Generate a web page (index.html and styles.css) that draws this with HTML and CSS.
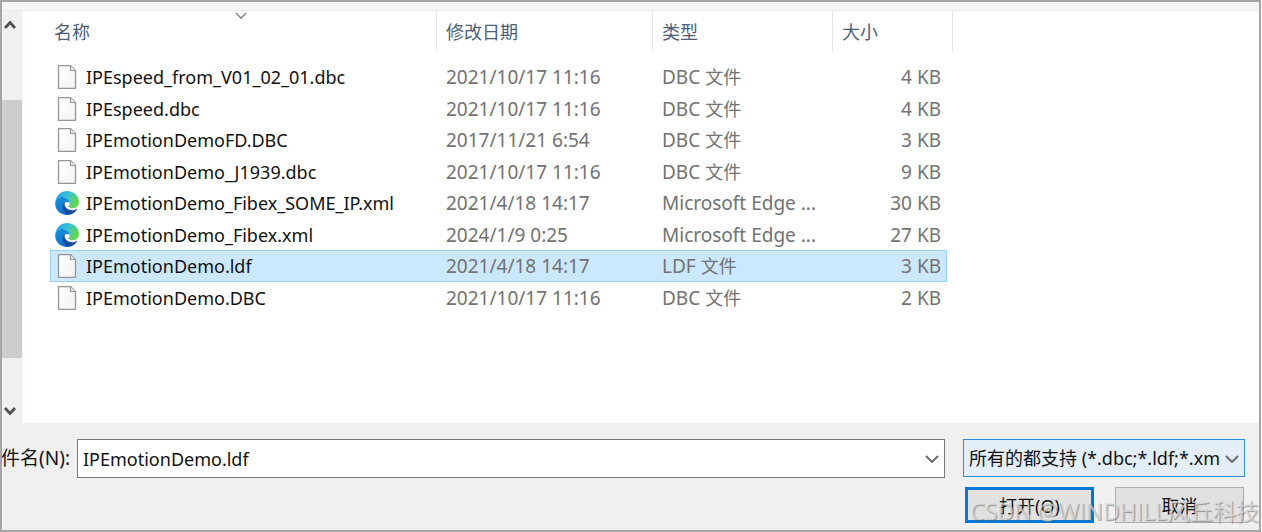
FILE: index.html
```html
<!DOCTYPE html>
<html lang="zh-CN">
<head>
<meta charset="utf-8">
<meta name="viewport" content="width=device-width, initial-scale=1">
<title>打开</title>
<link rel="stylesheet" href="styles.css">
</head>
<body>
<svg class="defs" width="0" height="0" aria-hidden="true">
  <defs>
    <linearGradient id="page" x1="0" y1="0" x2="1" y2="1"><stop offset="0" stop-color="#fff"/><stop offset="1" stop-color="#f1f3f5"/></linearGradient>
    <linearGradient id="edgeTop" x1="0" y1="0" x2="1" y2=".45"><stop offset="0" stop-color="#1f9fe0"/><stop offset=".5" stop-color="#35bfdc"/><stop offset="1" stop-color="#62d954"/></linearGradient>
    <linearGradient id="edgeLeft" x1="0" y1="0" x2=".5" y2="1"><stop offset="0" stop-color="#1a93dc"/><stop offset="1" stop-color="#0f6fcb"/></linearGradient>
    <symbol id="file" viewBox="0 0 24 24">
      <path d="M3.5 .5H15.5L20.5 5.5V23.5H3.5Z" fill="url(#page)" stroke="#969696" stroke-width="1.3"/>
      <path d="M15.5 .7V5.5H20.3" fill="#e9e9e9" stroke="#969696" stroke-width="1.2"/>
    </symbol>
    <symbol id="edge" viewBox="0 0 24 24">
      <path d="M.3 11C1 4.600 6 0 12 0C19 0 24 5.200 24 11C24 15 21 17.300 17.500 17.300C14.500 17.300 13.200 16.200 13.500 15C14.800 14 15 12.700 14.500 11C13.500 8 10 5.800 6.500 6C3.500 6.200 1.300 8 .3 11Z" fill="url(#edgeTop)"/>
      <path d="M.2 12C.5 8.300 3.600 6 7 6C11 6 14.300 8.600 14.700 12C12.500 10 9.200 11 8.200 13.500C7 17 9.500 21.800 14 23.700C6.500 25 -.3 19.500 .2 12Z" fill="url(#edgeLeft)"/>
      <path d="M9.800 11.300C8.800 15.500 12 19.300 17 19.300C19 19.300 20.800 18.700 22.400 17.800C20.600 21.300 17.500 23.600 13.500 24C8.800 22.500 6.300 17.600 8 13.500C8.400 12.600 9 11.800 9.800 11.300Z" fill="#124f9f"/>
    </symbol>
    <symbol id="chevron" viewBox="0 0 14 8"><path d="M1 1L7 7L13 1" fill="none" stroke="currentColor" stroke-width="1.8"/></symbol>
  </defs>
</svg>
<main class="dialog">
  <div class="strip"></div>
  <section class="browser">
    <div class="scrollbar">
      <button class="scroll-button" type="button" aria-label="向上滚动"><svg width="12" height="10" viewBox="0 0 12 10"><path d="M1 8L6 2.500L11 8" fill="none" stroke="#505050" stroke-width="2.800"/></svg></button>
      <div class="track"><div class="thumb"></div></div>
      <button class="scroll-button" type="button" aria-label="向下滚动"><svg width="12" height="10" viewBox="0 0 12 10"><path d="M1 2L6 7.500L11 2" fill="none" stroke="#505050" stroke-width="2.800"/></svg></button>
    </div>
    <div class="listing">
      <table class="files">
        <colgroup><col class="c-name"><col class="c-date"><col class="c-type"><col class="c-size"><col class="c-end"></colgroup>
        <thead>
          <tr><th scope="col">名称<svg class="sort" width="12" height="7"><use href="#chevron"/></svg></th><th scope="col">修改日期</th><th scope="col">类型</th><th scope="col" class="joined">大小</th><td></td></tr>
        </thead>
        <tbody>
          <tr><td><span class="name"><svg width="24" height="24"><use href="#file"/></svg>IPEspeed_from_V01_02_01.dbc</span></td><td>2021/10/17 11:16</td><td>DBC <span class="cjk">文件</span></td><td>4 KB</td><td></td></tr>
          <tr><td><span class="name"><svg width="24" height="24"><use href="#file"/></svg>IPEspeed.dbc</span></td><td>2021/10/17 11:16</td><td>DBC <span class="cjk">文件</span></td><td>4 KB</td><td></td></tr>
          <tr><td><span class="name"><svg width="24" height="24"><use href="#file"/></svg>IPEmotionDemoFD.DBC</span></td><td>2017/11/21 6:54</td><td>DBC <span class="cjk">文件</span></td><td>3 KB</td><td></td></tr>
          <tr><td><span class="name"><svg width="24" height="24"><use href="#file"/></svg>IPEmotionDemo_J1939.dbc</span></td><td>2021/10/17 11:16</td><td>DBC <span class="cjk">文件</span></td><td>9 KB</td><td></td></tr>
          <tr><td><span class="name"><svg width="24" height="24"><use href="#edge"/></svg>IPEmotionDemo_Fibex_SOME_IP.xml</span></td><td>2021/4/18 14:17</td><td>Microsoft Edge ...</td><td>30 KB</td><td></td></tr>
          <tr><td><span class="name"><svg width="24" height="24"><use href="#edge"/></svg>IPEmotionDemo_Fibex.xml</span></td><td>2024/1/9 0:25</td><td>Microsoft Edge ...</td><td>27 KB</td><td></td></tr>
          <tr class="selected"><td><span class="name"><svg width="24" height="24"><use href="#file"/></svg>IPEmotionDemo.ldf</span></td><td>2021/4/18 14:17</td><td>LDF <span class="cjk">文件</span></td><td>3 KB</td><td></td></tr>
          <tr><td><span class="name"><svg width="24" height="24"><use href="#file"/></svg>IPEmotionDemo.DBC</span></td><td>2021/10/17 11:16</td><td>DBC <span class="cjk">文件</span></td><td>2 KB</td><td></td></tr>
        </tbody>
      </table>
    </div>
  </section>
  <form class="footer">
    <div class="fields">
      <label class="file-label" for="filename">件名(N):</label>
      <div class="combo">
        <input id="filename" type="text" value="IPEmotionDemo.ldf">
        <button type="button" aria-label="显示历史记录"><svg width="14" height="8"><use href="#chevron"/></svg></button>
      </div>
      <div class="filter">
        <select aria-label="文件类型"><option>所有的都支持 (*.dbc;*.ldf;*.xm</option></select>
        <svg width="14" height="8"><use href="#chevron"/></svg>
      </div>
    </div>
    <div class="actions">
      <button class="action primary" type="button">打开(O)</button>
      <button class="action" type="button">取消</button>
    </div>
  </form>
  <div class="watermark">CSDN @WINDHILL风丘科技</div>
</main>
</body>
</html>
```

FILE: styles.css
```css
* { box-sizing: border-box; }
body {
  margin: 0;
  background: #fff;
  font-family: "Noto Sans", "Noto Sans CJK SC", sans-serif;
  font-size: 18px;
  color: #111;
}
button, input, select { font: inherit; color: inherit; margin: 0; }
.defs { position: absolute; }
.dialog {
  position: relative;
  display: flex;
  flex-direction: column;
  min-height: 100vh;
  margin-right: 1px;
  border: 2px solid #a6a6a6;
  background: #f0f0f0;
  overflow: hidden;
}
.strip {
  height: 9px;
  background: #f4f5f7;
  border-bottom: 1px solid #e8e9eb;
}
.browser { flex: 1; display: flex; background: #fff; }
.scrollbar {
  display: flex;
  flex-direction: column;
  width: 21px;
  background: #f0f0f0;
  border-right: 1px solid #f7f7f7;
}
.scroll-button {
  display: flex;
  align-items: center;
  height: 28px;
  padding: 0 0 0 2px;
  border: 0;
  background: none;
}
.scroll-button:last-child { height: 24px; }
.track { flex: 1; padding-top: 61px; }
.thumb { height: 258px; background: #cdcdcd; }
.listing { flex: 1; margin-left: 3px; padding-left: 23px; border-left: 1px solid #fafafa; }
.files {
  width: 903px;
  table-layout: fixed;
  border-collapse: separate;
  border-spacing: 0;
}
.c-name { width: 387px; }
.c-date { width: 216px; }
.c-type { width: 180px; }
.c-size { width: 114px; }
.c-end { width: 6px; }
.files thead th {
  position: relative;
  height: 41px;
  padding: 0 0 2px 9px;
  text-align: left;
  font-weight: 400;
  color: #4c607a;
  border-right: 1px solid #e5e5e5;
}
.files thead th:first-child { padding-left: 4px; }
.files thead th.joined { border-right: 0; }
.files thead td { border-right: 1px solid #e5e5e5; padding: 0; }
.sort { position: absolute; left: 50%; top: 1px; margin-left: -8px; color: #8a8a8a; }
.files tbody::before { content: ""; display: block; height: 9px; }
.files tbody td {
  height: 32px;
  padding: 0 0 0 9px;
  border: solid transparent;
  border-width: 1px 0;
  font-size: 19px;
  line-height: 24px;
  color: #727272;
  white-space: nowrap;
}
.files tbody tr:nth-child(even) td { height: 31px; }
.files tbody td:first-child { padding-left: 5px; font-size: 18px; color: #111; }
.files tbody td:nth-child(4) { padding: 0 6px 0 0; text-align: right; }
.files tbody td:last-child { padding: 0; }
.cjk { font-size: 18px; }
.name { display: flex; align-items: center; gap: 7px; }
.name svg { flex: none; }
.selected td { background: #cce8ff; }
.files .selected td:not(:last-child) { border-color: #99d1ff; }
.files .selected td:first-child { border-left-width: 1px; padding-left: 4px; }
.files .selected td:nth-child(4) { border-right-width: 1px; padding-right: 5px; }
.selected td:last-child { background: none; }
.footer { padding: 16px 14px 7px 0; }
.fields { display: flex; align-items: flex-start; }
.file-label {
  display: flex;
  justify-content: flex-end;
  width: 68px;
  margin-right: 7px;
  font-size: 19px;
  line-height: 38px;
  white-space: nowrap;
}
.combo {
  flex: 1;
  display: flex;
  height: 39px;
  margin-right: 18px;
  border: 1px solid #7a7a7a;
  background: #fff;
}
.combo input { flex: 1; min-width: 0; border: 0; padding: 0 5px; background: none; outline: 0; }
.combo button { display: flex; align-items: center; padding: 0 5px; border: 0; background: none; color: #666; }
.filter { position: relative; width: 282px; color: #111; }
.filter select {
  width: 100%;
  height: 38px;
  padding: 0 0 0 5px;
  appearance: none;
  border: 1px solid #2f8ddc;
  border-radius: 0;
  background: #e3eef8;
}
.filter svg { position: absolute; right: 6px; top: 16px; color: #666; pointer-events: none; }
.actions { display: flex; justify-content: flex-end; gap: 21px; margin: 9px 1px 0 0; }
.action { width: 129px; height: 36px; padding: 0; border: 1px solid #adadad; background: #e1e1e1; }
.primary { border: 3px solid #0078d7; }
.watermark {
  position: absolute;
  right: 0;
  bottom: 0;
  font-family: "Open Sans", "Noto Sans CJK SC", sans-serif;
  font-size: 23px;
  line-height: 38px;
  color: rgba(225, 225, 225, .7);
  text-shadow: 1px 1px 1px rgba(100, 100, 100, .6);
  white-space: nowrap;
  pointer-events: none;
}
```
